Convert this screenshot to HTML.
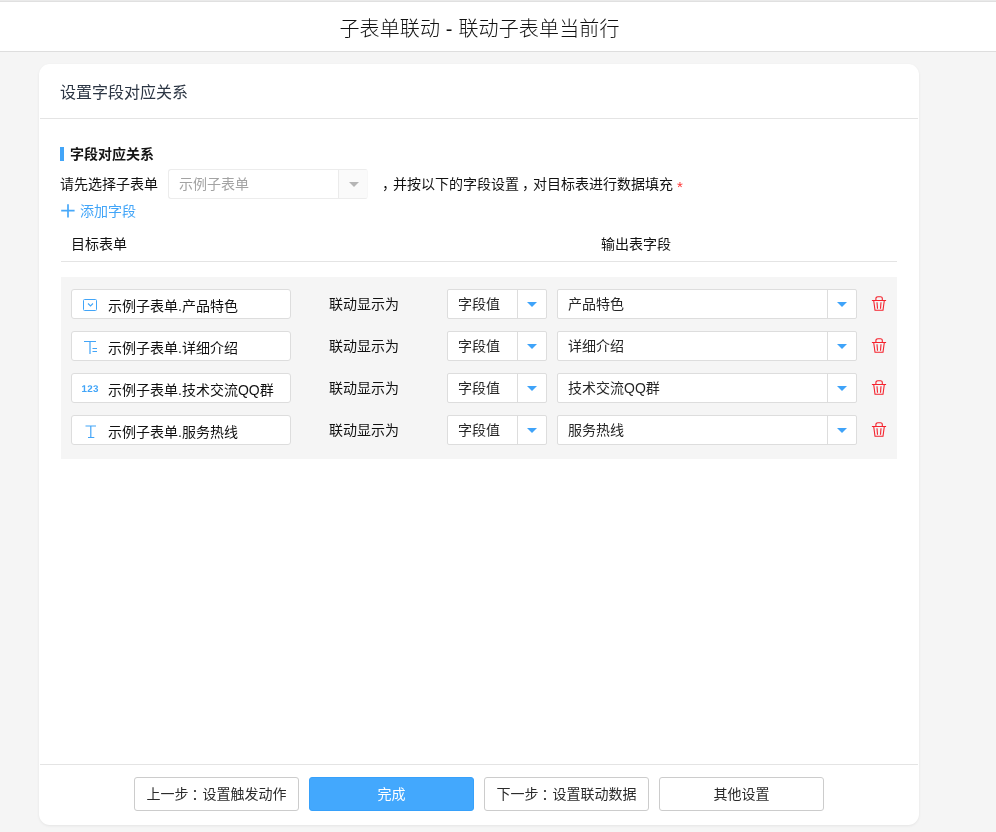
<!DOCTYPE html>
<html lang="zh-CN">
<head>
<meta charset="utf-8">
<title>子表单联动 - 联动子表单当前行</title>
<style>
*{box-sizing:border-box;margin:0;padding:0}
html,body{width:996px;height:832px;overflow:hidden}
body{background:#f5f5f5;font-family:"Liberation Sans","Noto Sans CJK SC",sans-serif;font-size:14px;color:#111;position:relative}
.abs{position:absolute;white-space:nowrap}
#topbar{left:0;top:0;width:996px;height:52px;background:linear-gradient(#eaeaea 0,#eaeaea 1px,#e0e0e0 1px,#e0e0e0 2px,#fff 2px);border-bottom:1px solid #dedede}
#title{left:0;top:15px;width:959px;text-align:center;font-size:20px;line-height:28px;color:#111;font-weight:300;letter-spacing:.15px}
#card{left:39px;top:64px;width:880px;height:761px;background:#fff;border-radius:11px;box-shadow:0 1px 3px rgba(0,0,0,.07)}
#cardtitle{left:60px;top:81px;font-size:16px;line-height:24px;color:#2c3644}
.hline{height:1px;background:#e4e4e4}
#bar{left:60px;top:147px;width:4px;height:14px;background:#42a5f8}
#sect{left:70px;top:143px;font-size:14px;line-height:22px;font-weight:700;color:#151515}
.t14{font-size:14px;line-height:22px;color:#111}
#sel0{left:168px;top:169px;width:200px;height:30px;border:1px solid #ececec;border-right-color:#f7f7f7;background:#fff;border-radius:3px;overflow:hidden}
#sel0 .txt{position:absolute;left:10px;top:3px;line-height:22px;color:#a3a3a3}
#sel0 .arr{position:absolute;right:-1px;top:0;width:30px;height:28px;border-left:1px solid #ebebeb;background:#fafafa}
.tri{position:absolute;width:0;height:0;border-left:5px solid transparent;border-right:5px solid transparent;border-top:5.4px solid #3fa3f9}
#add{left:80px;top:200px;color:#42a5f8;line-height:22px}
#rows{left:61px;top:277px;width:836px;height:182px;background:#f5f5f5}
.inp{height:30px;border:1px solid #ddd;background:#fff;border-radius:3px}
.inp .txt{position:absolute;left:36px;top:5px;line-height:22px;color:#111}
.sel{height:30px;border:1px solid #ddd;background:#fff;border-radius:2px}
.sel .txt{position:absolute;left:10px;top:3px;line-height:22px;color:#262626}
.sel .arr{position:absolute;right:0;top:0;width:29px;height:28px;border-left:1px solid #ddd}
.btn{top:777px;width:165px;height:34px;border:1px solid #ccc;background:#fff;border-radius:3px;text-align:center;line-height:32px;color:#2b2b2b;font-size:14px}
.btn.primary{background:#43a8fd;border-color:#37a1fb;color:#fff}
body{will-change:transform}
</style>
</head>
<body>
<div id="topbar" class="abs"></div>
<div id="title" class="abs">子表单联动 - 联动子表单当前行</div>
<div id="card" class="abs"></div>
<div id="cardtitle" class="abs">设置字段对应关系</div>
<div class="abs hline" style="left:40px;top:118px;width:878px"></div>
<div id="bar" class="abs"></div>
<div id="sect" class="abs">字段对应关系</div>
<div class="abs t14" style="left:60px;top:173px">请先选择子表单</div>
<div id="sel0" class="abs"><span class="txt">示例子表单</span><span class="arr"><i class="tri" style="left:10px;top:12px;border-top-color:#b5b5b5"></i></span></div>
<div class="abs t14" style="left:379px;top:173px"><span style="position:relative;left:3px">，</span>并按以下的字段设置<span style="position:relative;left:3px">，</span>对目标表进行数据填充 <span style="color:#f33;font-size:15px;line-height:10px;position:relative;top:2.5px;left:0px">*</span></div>
<svg class="abs" style="left:61px;top:204px" width="14" height="14" viewBox="0 0 14 14"><path d="M7 0.2V13.6M0.2 6.7H13.6" stroke="#47a8f9" stroke-width="1.7" fill="none"/></svg>
<div id="add" class="abs">添加字段</div>
<div class="abs t14" style="left:71px;top:233px">目标表单</div>
<div class="abs t14" style="left:601px;top:233px">输出表字段</div>
<div class="abs hline" style="left:61px;top:261px;width:836px"></div>
<div id="rows" class="abs"></div>

<!-- row 1 -->
<div class="abs inp" style="left:71px;top:289px;width:220px"><span class="txt">示例子表单.产品特色</span></div>
<div class="abs t14" style="left:329px;top:293px">联动显示为</div>
<div class="abs sel" style="left:447px;top:289px;width:100px"><span class="txt">字段值</span><span class="arr"><i class="tri" style="left:9px;top:12px"></i></span></div>
<div class="abs sel" style="left:557px;top:289px;width:300px"><span class="txt">产品特色</span><span class="arr"><i class="tri" style="left:9px;top:12px"></i></span></div>
<svg class="abs" style="left:82px;top:298px" width="16" height="14" viewBox="0 0 16 14"><rect x="1.5" y="1.5" width="13" height="11" rx="1" fill="none" stroke="#42a5f8" stroke-width="1"/><path d="M6 5.5L8.5 8L11 5.5" fill="none" stroke="#42a5f8" stroke-width="1.1"/></svg>
<svg class="abs" style="left:871px;top:295px" width="16" height="17" viewBox="0 0 16 17"><path d="M4.9 5.5V3.6a1.9 1.9 0 0 1 1.9-1.9h2.6a1.9 1.9 0 0 1 1.9 1.9V5.5M0.9 5.5H15.1M2.7 5.5L4 15.2H12L13.3 5.5M6 7.2L6.5 13.8M10 7.2L9.5 13.8" fill="none" stroke="#f5222d" stroke-width="1.1"/></svg>
<!-- row 2 -->
<div class="abs inp" style="left:71px;top:331px;width:220px"><span class="txt">示例子表单.详细介绍</span></div>
<div class="abs t14" style="left:329px;top:335px">联动显示为</div>
<div class="abs sel" style="left:447px;top:331px;width:100px"><span class="txt">字段值</span><span class="arr"><i class="tri" style="left:9px;top:12px"></i></span></div>
<div class="abs sel" style="left:557px;top:331px;width:300px"><span class="txt">详细介绍</span><span class="arr"><i class="tri" style="left:9px;top:12px"></i></span></div>
<svg class="abs" style="left:82px;top:339px" width="16" height="16" viewBox="0 0 16 16"><path d="M2 2.5H14M8 2.5V15M10.5 9.5H15M10.5 12.5H15" fill="none" stroke="#42a5f8" stroke-width="1.2"/></svg>
<svg class="abs" style="left:871px;top:337px" width="16" height="17" viewBox="0 0 16 17"><path d="M4.9 5.5V3.6a1.9 1.9 0 0 1 1.9-1.9h2.6a1.9 1.9 0 0 1 1.9 1.9V5.5M0.9 5.5H15.1M2.7 5.5L4 15.2H12L13.3 5.5M6 7.2L6.5 13.8M10 7.2L9.5 13.8" fill="none" stroke="#f5222d" stroke-width="1.1"/></svg>
<!-- row 3 -->
<div class="abs inp" style="left:71px;top:373px;width:220px"><span class="txt">示例子表单.技术交流QQ群</span></div>
<div class="abs t14" style="left:329px;top:377px">联动显示为</div>
<div class="abs sel" style="left:447px;top:373px;width:100px"><span class="txt">字段值</span><span class="arr"><i class="tri" style="left:9px;top:12px"></i></span></div>
<div class="abs sel" style="left:557px;top:373px;width:300px"><span class="txt">技术交流QQ群</span><span class="arr"><i class="tri" style="left:9px;top:12px"></i></span></div>
<div class="abs" style="left:81.4px;top:383px;font:bold 9.8px/14px 'Liberation Sans',sans-serif;letter-spacing:.3px;color:#42a5f8;text-rendering:geometricPrecision">123</div>
<svg class="abs" style="left:871px;top:379px" width="16" height="17" viewBox="0 0 16 17"><path d="M4.9 5.5V3.6a1.9 1.9 0 0 1 1.9-1.9h2.6a1.9 1.9 0 0 1 1.9 1.9V5.5M0.9 5.5H15.1M2.7 5.5L4 15.2H12L13.3 5.5M6 7.2L6.5 13.8M10 7.2L9.5 13.8" fill="none" stroke="#f5222d" stroke-width="1.1"/></svg>
<!-- row 4 -->
<div class="abs inp" style="left:71px;top:415px;width:220px"><span class="txt">示例子表单.服务热线</span></div>
<div class="abs t14" style="left:329px;top:419px">联动显示为</div>
<div class="abs sel" style="left:447px;top:415px;width:100px"><span class="txt">字段值</span><span class="arr"><i class="tri" style="left:9px;top:12px"></i></span></div>
<div class="abs sel" style="left:557px;top:415px;width:300px"><span class="txt">服务热线</span><span class="arr"><i class="tri" style="left:9px;top:12px"></i></span></div>

<svg class="abs" style="left:82px;top:423px" width="16" height="16" viewBox="0 0 16 16"><path d="M3.5 3H14M8.8 3V14.5M6 14.5H12.3" fill="none" stroke="#42a5f8" stroke-width="1.2"/></svg>
<svg class="abs" style="left:871px;top:421px" width="16" height="17" viewBox="0 0 16 17"><path d="M4.9 5.5V3.6a1.9 1.9 0 0 1 1.9-1.9h2.6a1.9 1.9 0 0 1 1.9 1.9V5.5M0.9 5.5H15.1M2.7 5.5L4 15.2H12L13.3 5.5M6 7.2L6.5 13.8M10 7.2L9.5 13.8" fill="none" stroke="#f5222d" stroke-width="1.1"/></svg>
<div class="abs hline" style="left:40px;top:764px;width:878px"></div>
<div class="abs btn" style="left:134px">上一步<span style="position:relative;left:3px">：</span>设置触发动作</div>
<div class="abs btn primary" style="left:309px">完成</div>
<div class="abs btn" style="left:484px">下一步<span style="position:relative;left:3px">：</span>设置联动数据</div>
<div class="abs btn" style="left:659px">其他设置</div>
</body>
</html>
